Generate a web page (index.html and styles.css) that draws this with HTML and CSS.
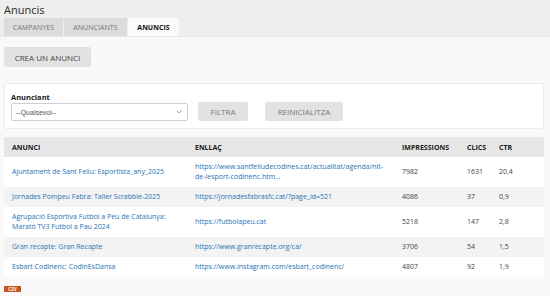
FILE: index.html
```html
<!DOCTYPE html>
<html lang="ca">
<head>
<meta charset="utf-8">
<title>Anuncis</title>
<link rel="stylesheet" href="styles.css">
</head>
<body>
<header class="page-header">
  <h1 class="page-title">Anuncis</h1>
  <nav class="tabs">
    <a class="tab">CAMPANYES</a>
    <a class="tab">ANUNCIANTS</a>
    <a class="tab tab-active">ANUNCIS</a>
  </nav>
</header>
<main class="content">
  <div class="actions">
    <a class="btn btn-create">CREA UN ANUNCI</a>
  </div>
  <form class="filter">
    <div class="filter-field">
      <label class="filter-label">Anunciant</label>
      <div class="select">
        <span class="select-text">--Qualsevol--</span>
        <svg class="select-arrow" width="6" height="4" viewBox="0 0 6 4"><path d="M0.8 0.8 L3 3 L5.2 0.8" fill="none" stroke="#888" stroke-width="0.8"/></svg>
      </div>
    </div>
    <a class="btn btn-filter">FILTRA</a>
    <a class="btn btn-reset">REINICIALITZA</a>
  </form>
  <table class="ads">
    <colgroup>
      <col class="c1"><col class="c2"><col class="c3"><col class="c4"><col class="c5">
    </colgroup>
    <thead>
      <tr><th>ANUNCI</th><th>ENLLAÇ</th><th>IMPRESSIONS</th><th>CLICS</th><th>CTR</th></tr>
    </thead>
    <tbody>
      <tr><td><a>Ajuntament de Sant Feliu: Esportista_any_2025</a></td><td><a>https://www.santfeliudecodines.cat/actualitat/agenda/nit-de-lesport-codinenc.htm...</a></td><td>7982</td><td>1631</td><td>20,4</td></tr>
      <tr class="odd"><td><a>Jornades Pompeu Fabra: Taller Scrabble-2025</a></td><td><a>https://jornadesfabrasfc.cat/?page_id=521</a></td><td>4086</td><td>37</td><td>0,9</td></tr>
      <tr><td><a>Agrupació Esportiva Futbol a Peu de Catalunya: Marató TV3 Futbol a Pau 2024</a></td><td><a>https://futbolapeu.cat</a></td><td>5218</td><td>147</td><td>2,8</td></tr>
      <tr class="odd"><td><a>Gran recapte: Gran Recapte</a></td><td><a>https://www.granrecapte.org/ca/</a></td><td>3706</td><td>54</td><td>1,5</td></tr>
      <tr><td><a>Esbart Codinenc: CodinEsDansa</a></td><td><a>https://www.instagram.com/esbart_codinenc/</a></td><td>4807</td><td>92</td><td>1,9</td></tr>
    </tbody>
  </table>
  <div class="export">
    <a class="csv">CSV</a>
  </div>
</main>
</body>
</html>
```

FILE: styles.css
```css
* { box-sizing: border-box; }
html, body { margin: 0; padding: 0; }
body {
  background: #f9f9f9;
  font-family: "Open Sans", "Liberation Sans", sans-serif;
  color: #333;
  width: 550px;
  height: 296px;
  overflow: hidden;
}
.page-header {
  background: #eeeeee;
  padding: 0 4px;
  border-bottom: 1px solid #e6e6e6;
}
.page-title {
  margin: 0;
  font-weight: 400;
  font-size: 11px;
  line-height: 17px;
  padding-top: 1px;
  color: #2b2b2b;
}
.tabs {
  display: flex;
  gap: 1px;
}
.tab {
  display: flex;
  align-items: center;
  justify-content: center;
  height: 18px;
  background: #dcdcdc;
  color: #777;
  font-size: 7px;
  letter-spacing: 0.05px;
}
.tab:nth-child(1) { width: 59px; }
.tab:nth-child(2) { width: 63px; }
.tab-active {
  width: 51px;
  background: #fafafa;
  color: #111;
  font-weight: 700;
}
.content {
  padding: 10px 6px 0 4px;
}
.btn {
  display: inline-flex;
  align-items: center;
  justify-content: center;
  background: #e2e2e2;
  border-radius: 2px;
  color: #555;
  font-size: 8px;
  height: 20px;
}
.btn-create {
  width: 87px;
  color: #444;
}
.actions { display: flex; }
.filter {
  margin: 16px 0 0;
  background: #fff;
  border: 1px solid #ececec;
  border-radius: 2px;
  height: 46px;
  display: flex;
  align-items: flex-end;
  padding: 0 0 7px 6px;
}
.filter-field {
  display: flex;
  flex-direction: column;
}
.filter-label {
  font-weight: 700;
  font-size: 7.5px;
  line-height: 10px;
  color: #222;
  margin-bottom: 1px;
}
.select {
  width: 177px;
  height: 18px;
  border: 1px solid #cfcfcf;
  border-radius: 2px;
  background: #fff;
  display: flex;
  align-items: center;
  justify-content: space-between;
  padding: 0 5px 0 4px;
}
.select-text {
  font-family: "Liberation Sans", Arial, sans-serif;
  font-size: 7px;
  color: #555;
}
.btn-filter {
  margin-left: 10px;
  width: 50px;
  height: 19px;
  color: #777;
}
.btn-reset {
  margin-left: 17px;
  width: 78px;
  height: 19px;
  color: #777;
}
.ads {
  margin-top: 8px;
  width: 540px;
  border-collapse: collapse;
  table-layout: fixed;
  font-size: 7px;
}
.c1 { width: 183px; }
.c2 { width: 207px; }
.c3 { width: 65px; }
.c4 { width: 32px; }
.c5 { width: 53px; }
.ads th {
  background: #e6e6e6;
  text-align: left;
  font-weight: 700;
  height: 20px;
  padding: 0 8px;
  color: #222;
}
.ads td {
  background: #fff;
  padding: 5px 8px;
  line-height: 10px;
  color: #444;
  vertical-align: middle;
}
.ads tr.odd td { background: #f3f3f3; }
.ads td a {
  color: #2673b5;
}
.export {
  display: flex;
  margin-top: 9px;
}
.csv {
  display: flex;
  align-items: center;
  justify-content: center;
  width: 17px;
  height: 6px;
  background: #c5561c;
  color: #fff;
  font-size: 4.5px;
  font-weight: 700;
  line-height: 6px;
}
```
